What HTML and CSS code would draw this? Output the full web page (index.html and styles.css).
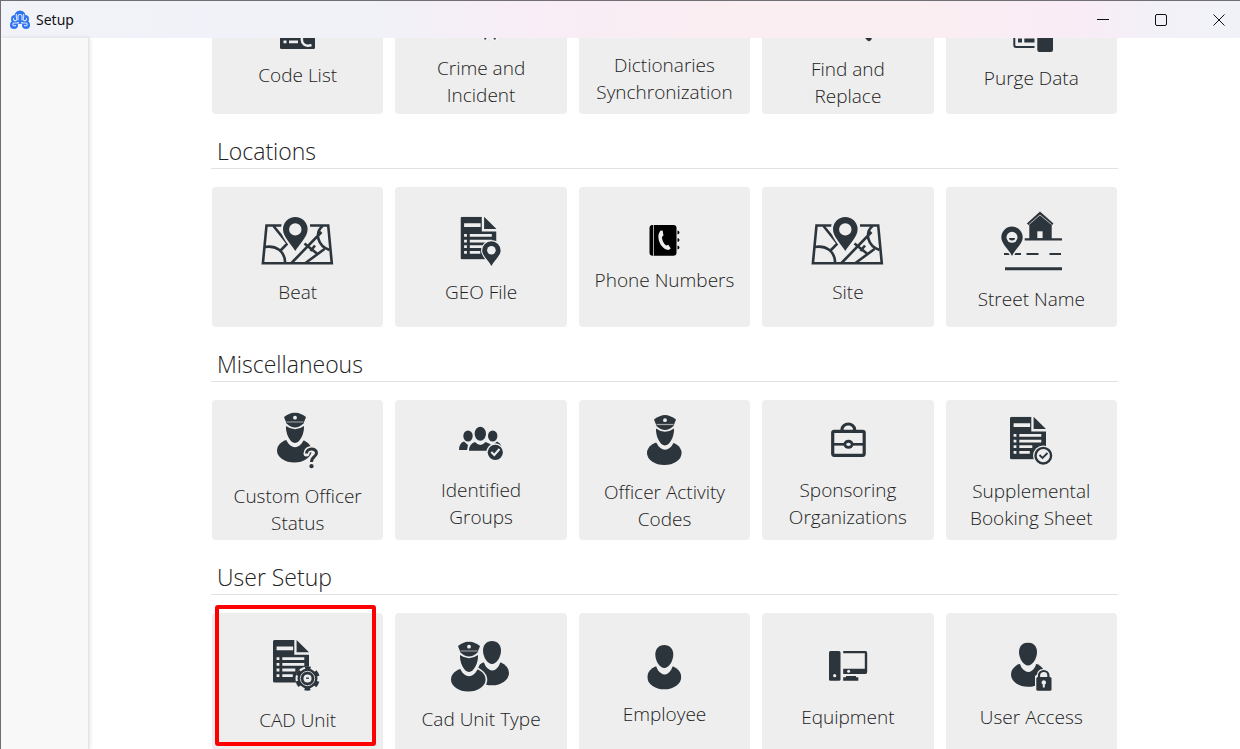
FILE: index.html
```html
<!DOCTYPE html>
<html lang="en">
<head>
    <meta charset="UTF-8">
    <meta name="viewport" content="width=device-width, initial-scale=1.0">
    <title>Setup</title>
    <link rel="stylesheet" href="styles.css">
</head>
<body>

    <!-- shapes used by more than one icon -->
    <svg class="sprite" aria-hidden="true">
        <symbol id="map" viewBox="0 0 80 69">
            <g fill="none" stroke="currentColor" stroke-width="2.6">
                <path d="M23.5 16.5H8.5L4.9 54.3H73.8L70.2 16.5H52"/>
                <path d="M15.5 17L29.5 34.5L23 41M6.5 38C18 36 27 42 27.2 54M33.5 54L63.5 23M47.5 54L66.5 40M46.5 34.5L59.5 45M52.5 42L57 36.5M64.5 17C56.5 24 59.5 37 71.5 41"/>
            </g>
            <path d="M37.3 43.5C32.5 36 24 29 24 20.5a13.3 13.3 0 0 1 26.6 0C50.6 29 42.1 36 37.3 43.5z" fill="#eee" stroke="#eee" stroke-width="2"/>
            <path fill-rule="evenodd" d="M37.3 42C33.5 35.5 25 28 25 20.3a12.3 12.3 0 0 1 24.6 0C49.6 28 41.1 35.5 37.3 42zM37.3 14.2a6.2 6.2 0 1 0 0 12.4a6.2 6.2 0 1 0 0-12.4z"/>
        </symbol>
        <symbol id="doc" viewBox="0 0 36 43">
            <path d="M1.5 0H21.3V14.7H36V42.6H1.5Q0 42.6 0 41.1V1.5Q0 0 1.5 0zM23.6 0L36 12.3H23.6z"/>
            <path fill="#eee" d="M3.6 6.6h16.5v3.7h-16.5zM3.6 17.3h2.8v2.8h-2.8zM9.3 17.3h22v2.8h-22zM3.6 23h2.8v2.8h-2.8zM9.3 23h22v2.8h-22zM3.6 28.6h2.8v2.8h-2.8zM9.3 28.6h13v2.8h-13zM3.6 34.2h2.8v2.8h-2.8zM9.3 34.2h10.5v2.8h-10.5z"/>
        </symbol>
        <symbol id="person" viewBox="0 0 34 45">
            <ellipse cx="17" cy="32" rx="17" ry="12.3"/>
            <path fill="#eee" d="M6 15L10.5 25C15 31 20 31 24 24.5L28 15z"/>
            <path d="M17 0C22.5 0 26 4 26 9.5C26 16 21.5 23 17 23C12.5 23 8 16 8 9.5C8 4 11.5 0 17 0z"/>
        </symbol>
        <symbol id="officer" viewBox="0 0 36 51">
            <ellipse cx="17.3" cy="38" rx="17.3" ry="12"/>
            <path fill="#eee" d="M6 20L9.5 28C14 37 22 37 26.5 28L30 20z"/>
            <path d="M9 13.5Q18 20 27 13.5C27.5 21 23 30.5 18 30.5C13 30.5 8.5 21 9 13.5z"/>
            <path d="M18 0Q23 0 29 4.5L26.5 11Q18 19 9.5 11L7 4.5Q13 0 18 0z"/>
            <path d="M9.5 9.5H26.5" stroke="#aaa" stroke-width="1.2"/>
            <circle cx="18" cy="5.2" r="1.9" fill="#eee"/>
        </symbol>
    </svg>

    <div class="window">
        <header class="titlebar">
            <svg class="logo" width="20" height="20" viewBox="0 0 20 20" aria-hidden="true">
                <g fill="#2f73f0">
                    <circle cx="10" cy="6" r="5.5"/>
                    <circle cx="5" cy="9" r="4"/>
                    <circle cx="15" cy="9" r="4"/>
                    <circle cx="4" cy="15" r="4"/>
                    <circle cx="16" cy="15" r="4"/>
                    <path d="M5 8h10v5l-5 1l-5-1z"/>
                </g>
                <g fill="none" stroke="#dce8fd" stroke-width="1.1" stroke-linecap="round">
                    <path d="M8 10V6.5a2 2 0 0 1 4 0V10"/>
                    <path d="M6.5 4.5C5 7 8.5 9.5 6 10.5C4.5 11 3 10 3.5 8.5"/>
                    <path d="M13.5 4.5C15 7 11.5 9.5 14 10.5C15.5 11 17 10 16.5 8.5"/>
                    <path d="M8.5 12.5C6.5 14 4 12 3 13.5C2 15.5 4.5 16.5 5.5 15.3"/>
                    <path d="M11.5 12.5C13.5 14 16 12 17 13.5C18 15.5 15.5 16.5 14.5 15.3"/>
                </g>
            </svg>
            <span class="title">Setup</span>
            <div class="controls">
                <button type="button" aria-label="Minimize"><svg width="12" height="12" viewBox="0 0 12 12"><path d="M0 5.5H12"/></svg></button>
                <button type="button" aria-label="Maximize"><svg width="12" height="12" viewBox="0 0 12 12"><rect x=".5" y=".5" width="11" height="11" rx="1.5"/></svg></button>
                <button type="button" aria-label="Close"><svg width="12" height="12" viewBox="0 0 12 12"><path d="M.5 .5L11.5 11.5M11.5 .5L.5 11.5"/></svg></button>
            </div>
        </header>

        <div class="layout">
            <aside class="sidebar"></aside>

            <main class="content">
                <section class="group">
                    <div class="tiles scrolled">
                        <a class="tile" href="#">
                            <svg width="80" height="61" viewBox="0 0 80 61">
                                <rect x="22" y="14" width="35" height="35" rx="1.5"/>
                                <path fill="#eee" d="M25.5 40.5h3v2.8h-3zM31 40.5h9v2.8h-9z"/>
                                <path d="M53.5 45C47.5 47 43 44 44 38" fill="none" stroke="#eee" stroke-width="2.5"/>
                            </svg>
                            Code List
                        </a>
                        <a class="tile" href="#">
                            <svg width="80" height="74" viewBox="0 0 80 74">
                                <path d="M43 52L44.5 58M55 52L53.5 58" stroke="#fff" stroke-width="5" stroke-linecap="round"/>
                                <path d="M43 52L44.5 59.5M55 52L53.5 59.5" stroke="currentColor" stroke-width="2"/>
                            </svg>
                            Crime and Incident
                        </a>
                        <a class="tile" href="#">
                            <svg width="80" height="68" viewBox="0 0 80 68">
                                <rect x="25" y="14" width="30" height="32" rx="2"/>
                            </svg>
                            Dictionaries Synchronization
                        </a>
                        <a class="tile" href="#">
                            <svg width="80" height="76" viewBox="0 0 80 76">
                                <circle cx="43" cy="40" r="12" fill="none" stroke="currentColor" stroke-width="4"/>
                                <path d="M52 50L61 59.5" stroke="currentColor" stroke-width="5" stroke-linecap="round"/>
                            </svg>
                            Find and Replace
                        </a>
                        <a class="tile" href="#">
                            <svg width="80" height="67" viewBox="0 0 80 67">
                                <path d="M43.5 50H25Q23.3 50 23.3 48V20H43" fill="none" stroke="currentColor" stroke-width="2"/>
                                <path d="M27 41.5h4v4h-4zM33.3 41.5h10.2v4h-10.2zM46.3 30H62V53Q62 55 60 55H48.3Q46.3 55 46.3 53z"/>
                            </svg>
                            Purge Data
                        </a>
                    </div>
                </section>

                <section class="group">
                    <h2>Locations</h2>
                    <div class="tiles">
                        <a class="tile" href="#">
                            <svg width="80" height="69"><use href="#map"/></svg>
                            Beat
                        </a>
                        <a class="tile" href="#">
                            <svg width="80" height="69" viewBox="0 0 80 69">
                                <use href="#doc" x="19.5" y="7.7" width="36" height="43"/>
                                <path stroke="#eee" stroke-width="2.4" paint-order="stroke" d="M50.4 57C48 51.5 41.2 47 41.2 41.5a9.2 9.2 0 0 1 18.4 0C59.6 47 52.8 51.5 50.4 57z"/>
                                <circle cx="50.4" cy="41.3" r="4.3" fill="#eee"/>
                            </svg>
                            GEO File
                        </a>
                        <a class="tile" href="#">
                            <svg class="black" width="80" height="45" viewBox="0 0 80 45">
                                <rect x="25.5" y="4" width="27" height="30.7" rx="3"/>
                                <path d="M29.5 4V35" stroke="#aaa" stroke-width="1"/>
                                <path d="M53.5 9.5q2 .3 2 2t-2 2zM53.5 17q2 .3 2 2t-2 2zM53.5 24.5q2 .3 2 2t-2 2z"/>
                                <path fill="#eee" d="M36.2 9.8L38.6 9.5L39.5 14.5L37.9 16C38.2 20 39.8 22.8 42.2 24.5L44.3 23.8L46.8 27.5L44.5 29C38.5 28.5 33.5 21 34.5 13.5z"/>
                            </svg>
                            Phone Numbers
                        </a>
                        <a class="tile" href="#">
                            <svg width="80" height="69"><use href="#map"/></svg>
                            Site
                        </a>
                        <a class="tile" href="#">
                            <svg width="80" height="83" viewBox="0 0 80 83">
                                <path d="M49 9.5L62.5 21.5L60.7 23.5V37H38.3V23.5L35.8 21.5z"/>
                                <path d="M38 22.5L49 13L60.5 22.5" fill="none" stroke="#bbb" stroke-width="1"/>
                                <path d="M46.3 29.3h5.3v7h-5.3z" fill="#eee"/>
                                <path d="M33.7 37.3H71M13 52H30M35.5 52H47.5M58.5 52H70" stroke="currentColor" stroke-width="2.2"/>
                                <path d="M14 66.7H71" stroke="currentColor" stroke-width="3"/>
                                <path stroke="#eee" stroke-width="3" paint-order="stroke" d="M21 54C18 47.5 10.3 42 10.3 35.3a10.7 10.7 0 0 1 21.4 0C31.7 42 24 47.5 21 54z"/>
                                <circle cx="21" cy="35.3" r="5.5" fill="#eee"/>
                                <path d="M18 36H24Q24 38.5 21 38.5T18 36z"/>
                            </svg>
                            Street Name
                        </a>
                    </div>
                </section>

                <section class="group">
                    <h2>Miscellaneous</h2>
                    <div class="tiles">
                        <a class="tile" href="#">
                            <svg width="80" height="78" viewBox="0 0 80 78">
                                <use href="#officer" x="19" y="8.5" width="36" height="51"/>
                                <g fill="none">
                                    <path d="M48.5 49.5C48.5 43.5 58.5 43.5 58.5 49C58.5 53 53.5 52.5 53.5 58" stroke="#eee" stroke-width="6" stroke-linecap="round"/>
                                    <path d="M48.5 49.5C48.5 43.5 58.5 43.5 58.5 49C58.5 53 53.5 52.5 53.5 58" stroke="currentColor" stroke-width="3"/>
                                </g>
                                <circle cx="53.5" cy="62.2" r="2.1"/>
                            </svg>
                            Custom Officer Status
                        </a>
                        <a class="tile" href="#">
                            <svg width="80" height="66" viewBox="0 0 80 66">
                                <ellipse cx="27" cy="26" rx="4.7" ry="5.6"/>
                                <ellipse cx="51.7" cy="26" rx="4.7" ry="5.6"/>
                                <path d="M18 40Q18 33 23 31.5L27 35L26 40zM52 35L56 31.5Q59 32.5 60.5 36L52 38z"/>
                                <path d="M28 40.7Q28 34 34 32Q39.3 38 44.5 32Q50 34 51 36L47 40.7z" stroke="#eee" stroke-width="1.8" paint-order="stroke"/>
                                <ellipse cx="39.3" cy="23.8" rx="7" ry="8.3" fill="#eee"/>
                                <ellipse cx="39.3" cy="23.8" rx="5.7" ry="7"/>
                                <circle cx="54.3" cy="42.3" r="9" fill="#eee"/>
                                <circle cx="54.3" cy="42.3" r="7.6"/>
                                <path d="M50.3 42L53.3 45L58.5 39" fill="none" stroke="#eee" stroke-width="2"/>
                            </svg>
                            Identified Groups
                        </a>
                        <a class="tile" href="#">
                            <svg width="80" height="70" viewBox="0 0 80 70"><use href="#officer" x="23" y="7" width="36" height="51"/></svg>
                            Officer Activity Codes
                        </a>
                        <a class="tile" href="#">
                            <svg width="80" height="66" viewBox="0 0 80 66">
                                <g fill="none" stroke="currentColor" stroke-width="3.2">
                                    <rect x="24.7" y="21.3" width="31.5" height="24" rx="1.5"/>
                                    <path d="M34 21V19.5a6.3 5.5 0 0 1 12.6 0V21"/>
                                    <path d="M25 34.3H56.5" stroke-width="2.6"/>
                                </g>
                                <ellipse cx="40.5" cy="34.3" rx="5" ry="4.5"/>
                                <ellipse cx="40.5" cy="34.3" rx="2.3" ry="1.6" fill="#eee"/>
                            </svg>
                            Sponsoring Organizations
                        </a>
                        <a class="tile" href="#">
                            <svg width="80" height="68" viewBox="0 0 80 68">
                                <use href="#doc" x="19" y="7.7" width="36" height="43"/>
                                <circle cx="52.3" cy="46.7" r="10.3" fill="#eee"/>
                                <circle cx="52.3" cy="46.7" r="7.8" fill="none" stroke="currentColor" stroke-width="2.4"/>
                                <path d="M48.5 46L51.5 49L56.5 44" fill="none" stroke="currentColor" stroke-width="1.8"/>
                            </svg>
                            Supplemental Booking Sheet
                        </a>
                    </div>
                </section>

                <section class="group">
                    <h2>User Setup</h2>
                    <div class="tiles">
                        <a class="tile highlight" href="#">
                            <svg width="80" height="73" viewBox="0 0 80 73">
                                <use href="#doc" x="15" y="7" width="36" height="43"/>
                                <circle cx="49.5" cy="45.5" r="12" fill="#eee"/>
                                <circle cx="49.5" cy="45.5" r="10"/>
                                <circle cx="49.5" cy="45.5" r="10.5" fill="none" stroke="currentColor" stroke-width="3.5" stroke-dasharray="5.5 5.5" transform="rotate(15 49.5 45.5)"/>
                                <circle cx="49.5" cy="45.5" r="7.2" fill="none" stroke="#ccc" stroke-width="1"/>
                                <circle cx="49.5" cy="45.5" r="4" fill="#eee"/>
                                <path d="M48 44.5h3v1.3h-3z"/>
                            </svg>
                            CAD Unit
                        </a>
                        <a class="tile" href="#">
                            <svg width="80" height="71" viewBox="0 0 80 71">
                                <use href="#person" x="34" y="7" width="34" height="45"/>
                                <ellipse cx="27.3" cy="45.8" rx="19" ry="14" fill="#eee"/>
                                <use href="#officer" x="10" y="7.5" width="36" height="51"/>
                            </svg>
                            Cad Unit Type
                        </a>
                        <a class="tile" href="#">
                            <svg width="80" height="61" viewBox="0 0 80 61"><use href="#person" x="23.3" y="6" width="34" height="45"/></svg>
                            Employee
                        </a>
                        <a class="tile" href="#">
                            <svg width="80" height="67" viewBox="0 0 80 67">
                                <rect x="21" y="15" width="11.5" height="29.7" rx="1.5"/>
                                <circle cx="26.7" cy="39.7" r="1.6" fill="#eee"/>
                                <path d="M35.2 15H57.5Q59.2 15 59.2 17V36Q59.2 38 57.5 38H35.2V32.7H56.8V17.2H35.2zM38 40H48V41.3H50.3V44.7H35.2V41.3H38z"/>
                                <circle cx="40.6" cy="35.3" r="1.5" fill="#eee"/>
                            </svg>
                            Equipment
                        </a>
                        <a class="tile" href="#">
                            <svg width="80" height="67" viewBox="0 0 80 67">
                                <use href="#person" x="20" y="6.5" width="34" height="45"/>
                                <path d="M44 56V40L46 38.5Q46.5 33 52.7 33T59.5 38.5L61.5 40V56z" fill="#eee"/>
                                <rect x="45.3" y="41" width="15.2" height="13.7" rx="1.5"/>
                                <path d="M48 42V39.5a4.7 4.5 0 0 1 9.4 0V42" fill="none" stroke="currentColor" stroke-width="2.2"/>
                                <path d="M52.8 44.2a2.2 2.2 0 0 1 1 4.2V51.5h-2V48.4a2.2 2.2 0 0 1 1-4.2z" fill="#eee"/>
                            </svg>
                            User Access
                        </a>
                    </div>
                </section>
            </main>
        </div>
    </div>

</body>
</html>
```
FILE: styles.css
```css
* {
    box-sizing: border-box;
}
body {
    margin: 0;
    font-family: "Open Sans", "Noto Sans", sans-serif;
    color: #222;
    background: #fff;
}
.sprite {
    position: absolute;
    width: 0;
    height: 0;
}
.window {
    display: flex;
    flex-direction: column;
    height: 100vh;
    overflow: hidden;
    border-top: 1px solid #706d74;
    border-left: 1px solid #706d74;
}
.titlebar {
    display: flex;
    align-items: center;
    flex: none;
    height: 37px;
    padding-left: 9px;
    background: linear-gradient(90deg, #f1f3f9 0%, #f1f1f8 30%, #f9edf6 44%, #faeef2 60%, #faeef2 74%, #f9ecf6 87%, #f2f1f8 94%, #f1f2f8 100%);
}
.title {
    margin-left: 6px;
    font-family: "Noto Sans", sans-serif;
    font-size: 14px;
    color: #111;
}
.controls {
    display: flex;
    gap: 16px;
    margin-left: auto;
    align-self: stretch;
}
.controls button {
    display: flex;
    align-items: center;
    justify-content: center;
    width: 42px;
    padding: 0;
    border: none;
    background: none;
}
.controls svg {
    fill: none;
    stroke: #111;
}
.layout {
    display: flex;
    flex: 1;
    min-height: 0;
}
.sidebar {
    flex: none;
    width: 88px;
    background: #f8f8f8;
    border-right: 1px solid #e4e4e4;
    box-shadow: 1px 0 4px rgba(0, 0, 0, 0.12);
}
.content {
    flex: 1;
    overflow: hidden;
}
.group {
    max-width: 907px;
    margin: 0 auto;
}
h2 {
    height: 55px;
    margin: 0 0 18px;
    padding: 21px 6px 0;
    border-bottom: 1px solid #e2e2e2;
    font-size: 23px;
    font-weight: 300;
    line-height: 32px;
}
.tiles {
    display: grid;
    grid-template-columns: repeat(5, 1fr);
    gap: 12px;
    margin: 0 1px;
}
/* first row is partly under the title bar */
.scrolled {
    margin-top: -64px;
}
.tile {
    position: relative;
    display: flex;
    flex-direction: column;
    align-items: center;
    justify-content: center;
    height: 140px;
    padding: 0 13px;
    border-radius: 4px;
    background: #eee;
    color: #222;
    font-size: 19px;
    font-weight: 300;
    line-height: 27px;
    text-align: center;
    text-decoration: none;
}
.tile svg {
    flex: none;
    margin: 1px 0;
    color: #2d353c;
    fill: currentColor;
}
.tile svg.black {
    color: #000;
}
.highlight::after {
    content: "";
    position: absolute;
    top: -8px;
    right: 7px;
    bottom: 7px;
    left: 3px;
    border: 4px solid #f00;
    border-radius: 3px;
}
```
